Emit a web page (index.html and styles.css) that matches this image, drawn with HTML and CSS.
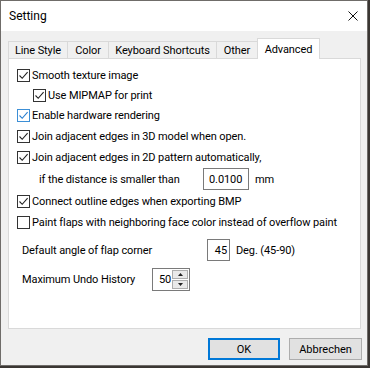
FILE: index.html
```html
<!DOCTYPE html>
<html lang="en">
<head>
    <meta charset="UTF-8">
    <title>Setting</title>
    <link rel="stylesheet" href="styles.css">
</head>
<body>
    <div class="window">
        <div class="titlebar">
            <span class="title">Setting</span>
            <svg class="close" viewBox="0 0 10 10"><path d="M0.5 0.5L9.5 9.5M9.5 0.5L0.5 9.5"/></svg>
        </div>

        <div class="content">
            <div class="tabs">
                <div class="tab tab-line">Line Style</div>
                <div class="tab tab-color">Color</div>
                <div class="tab tab-keys">Keyboard Shortcuts</div>
                <div class="tab tab-other">Other</div>
                <div class="tab tab-adv active">Advanced</div>
            </div>

            <div class="panel">
                <div class="row">
                    <span class="check on"><svg viewBox="0 0 11 11"><path d="M1.5 5.5L4.2 8.3L9.6 2.2"/></svg></span>
                    <span>Smooth texture image</span>
                </div>
                <div class="row indent">
                    <span class="check on"><svg viewBox="0 0 11 11"><path d="M1.5 5.5L4.2 8.3L9.6 2.2"/></svg></span>
                    <span>Use MIPMAP for print</span>
                </div>
                <div class="row">
                    <span class="check on hover"><svg viewBox="0 0 11 11"><path d="M1.5 5.5L4.2 8.3L9.6 2.2"/></svg></span>
                    <span>Enable hardware rendering</span>
                </div>
                <div class="row gap1">
                    <span class="check on"><svg viewBox="0 0 11 11"><path d="M1.5 5.5L4.2 8.3L9.6 2.2"/></svg></span>
                    <span>Join adjacent edges in 3D model when open.</span>
                </div>
                <div class="row gap1">
                    <span class="check on"><svg viewBox="0 0 11 11"><path d="M1.5 5.5L4.2 8.3L9.6 2.2"/></svg></span>
                    <span>Join adjacent edges in 2D pattern automatically,</span>
                </div>
                <div class="row field-row gap1">
                    <span class="label label-dist">if the distance is smaller than</span>
                    <span class="textbox box-dist">0.0100</span>
                    <span class="unit">mm</span>
                </div>
                <div class="row gap1">
                    <span class="check on"><svg viewBox="0 0 11 11"><path d="M1.5 5.5L4.2 8.3L9.6 2.2"/></svg></span>
                    <span>Connect outline edges when exporting BMP</span>
                </div>
                <div class="row gap1">
                    <span class="check"></span>
                    <span>Paint flaps with neighboring face color instead of overflow paint</span>
                </div>
                <div class="row field-row gap7">
                    <span class="label label-angle">Default angle of flap corner</span>
                    <span class="textbox box-angle">45</span>
                    <span class="unit">Deg. (45-90)</span>
                </div>
                <div class="row spin-row gap7">
                    <span class="label label-undo">Maximum Undo History</span>
                    <span class="spinner">
                        <span class="spin-value">50</span>
                        <span class="spin-buttons">
                            <span class="spin-btn"><svg viewBox="0 0 5 3"><path d="M2.5 0L5 3H0Z"/></svg></span>
                            <span class="spin-btn"><svg viewBox="0 0 5 3"><path d="M0 0H5L2.5 3Z"/></svg></span>
                        </span>
                    </span>
                </div>
            </div>

            <div class="buttons">
                <button class="btn btn-ok">OK</button>
                <button class="btn btn-cancel">Abbrechen</button>
            </div>
        </div>
    </div>
</body>
</html>
```

FILE: styles.css
```css
* { box-sizing: border-box; }
body { margin: 0; background: #3a3633; font-family: Roboto, "Liberation Sans", sans-serif; font-size: 11px; letter-spacing: -0.1px; color: #000; }

.window { width: 368px; height: 366px; border: 1px solid #6f6c69; background: #f0f0f0; }
.titlebar { height: 30px; background: #fff; display: flex; align-items: center; justify-content: space-between; padding: 0 9px 0 8px; }
.title { font-size: 12px; letter-spacing: 0; }
.close { width: 10px; height: 10px; }
.close path { stroke: #111; stroke-width: 1; fill: none; }

.content { padding: 7px 6px 0 7px; }

.tabs { display: flex; align-items: flex-end; height: 20px; position: relative; z-index: 1; }
.tab { height: 17px; border: 1px solid #d9d9d9; border-bottom: none; margin-right: -1px; background: #f0f0f0; display: flex; align-items: center; justify-content: center; white-space: nowrap; }
.tab.active { height: 21px; margin-bottom: -1px; background: #fff; }
.tab-line { width: 60px; }
.tab-color { width: 42px; }
.tab-keys { width: 109px; }
.tab-other { width: 42px; }
.tab-adv { width: 63px; }

.panel { height: 271px; background: #fff; border: 1px solid #d9d9d9; padding: 6px 8px 0 8px; }
.row { display: flex; align-items: center; height: 20px; white-space: nowrap; }
.gap1 { margin-top: 1px; }
.gap7 { margin-top: 7px; }
.indent { padding-left: 16px; }
.field-row { height: 22px; }
.spin-row { height: 23px; }

.check { width: 13px; height: 13px; border: 1px solid #333; background: #fff; margin-right: 2px; flex: none; display: flex; }
.check svg { width: 11px; height: 11px; }
.check path { stroke: #222; stroke-width: 1.1; fill: none; }
.check.hover { border-color: #3c8fd6; }
.check.hover path { stroke: #2a7fcf; }

.label-dist { margin-left: 22px; width: 164px; }
.label-angle { margin-left: 5px; width: 185px; }
.label-undo { margin-left: 5px; width: 130px; }

.textbox { height: 22px; border: 1px solid #7a7a7a; background: #fff; display: flex; align-items: center; }
.box-dist { width: 46px; padding-left: 5px; }
.box-angle { width: 23px; justify-content: flex-end; padding-right: 2px; }
.unit { margin-left: 6px; }

.spinner { width: 38px; height: 23px; border: 1px solid #7a7a7a; display: flex; align-items: center; justify-content: space-between; padding: 1px; }
.spin-value { padding-left: 5px; }
.spin-buttons { display: flex; flex-direction: column; gap: 1px; }
.spin-btn { width: 16px; height: 9px; border: 1px solid #adadad; background: #e9e9e9; display: flex; align-items: center; justify-content: center; }
.spin-btn svg { width: 5px; height: 3px; }
.spin-btn path { fill: #222; }

.buttons { display: flex; justify-content: flex-end; gap: 9px; margin-top: 9px; margin-right: -1px; }
.btn { height: 22px; background: #e1e1e1; border: 1px solid #adadad; font-family: inherit; font-size: 11px; color: #000; padding: 0; }
.btn-ok { width: 72px; border: 2px solid #0078d7; }
.btn-cancel { width: 73px; }
```
